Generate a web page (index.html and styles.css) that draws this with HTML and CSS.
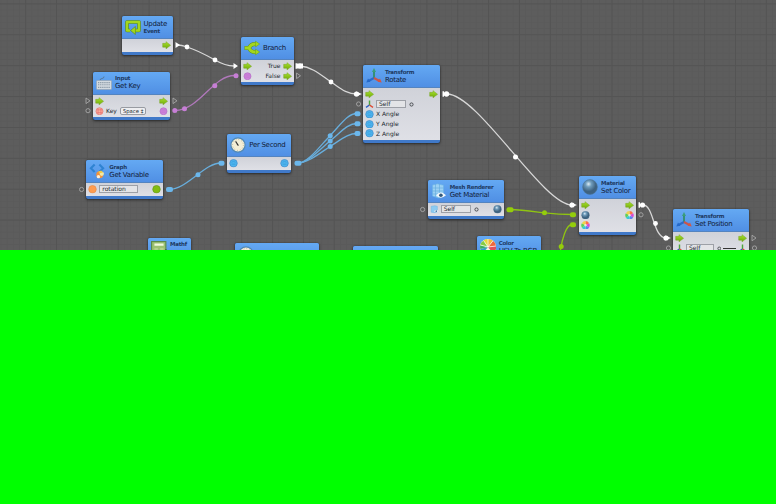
FILE: index.html
```
<!DOCTYPE html>
<html lang="en">
<head>
<meta charset="utf-8">
<title>Flow graph</title>
<link rel="stylesheet" href="styles.css">
</head>
<body>
<svg class="defs" width="0" height="0">
  <defs>
    <linearGradient id="gArrow" x2="0" y2="1"><stop stop-color="#a9e32c"/><stop offset="1" stop-color="#6fa90a"/></linearGradient>
    <radialGradient id="gBall" cx=".4" cy=".3"><stop stop-color="#dcecf5"/><stop offset=".4" stop-color="#6f9cbc"/><stop offset="1" stop-color="#3f627f"/></radialGradient>
    <symbol id="arrow" viewBox="0 0 9 8"><path d="M.7 2.1H4V.4L8.6 4 4 7.6V5.900H.7z" fill="url(#gArrow)" stroke="#78a52a" stroke-width=".5"/></symbol>
    <symbol id="num" viewBox="0 0 9 9"><circle cx="4.5" cy="4.5" r="4" fill="#4eb4ee" stroke="#3c88ca" stroke-width=".7"/><path d="M2.3 3.5q2.2-2 4.4 0M2.5 5.5h4" stroke="#3295d6" fill="none" stroke-width=".6"/></symbol>
    <symbol id="pink" viewBox="0 0 9 9"><circle cx="4.5" cy="4.5" r="3.7" fill="#cf82dc" stroke="#b26ac4" stroke-width=".7"/><path d="M2 3.2h5M2 5.4h5" stroke="#b568c6" stroke-width=".5"/></symbol>
    <symbol id="red" viewBox="0 0 9 9"><circle cx="4.5" cy="4.5" r="3.7" fill="#f8b09b" stroke="#e77272" stroke-width=".8"/><path d="M2 3h5M2 6h5M3 2v5M6 2v5" stroke="#e8616a" stroke-width=".6"/></symbol>
    <symbol id="orange" viewBox="0 0 9 9"><circle cx="4.5" cy="4.5" r="4" fill="#ff9c50" stroke="#e88b48" stroke-width=".7"/></symbol>
    <symbol id="green" viewBox="0 0 9 9"><circle cx="4.5" cy="4.5" r="4" fill="#82bd12" stroke="#649a18" stroke-width=".7"/></symbol>
    <symbol id="ball" viewBox="0 0 16 16"><circle cx="8" cy="8" r="7.4" fill="url(#gBall)" stroke="#4d7697" stroke-width=".6"/></symbol>
    <symbol id="axes" viewBox="0 0 16 16"><g fill="none" stroke-width="2"><path d="M8 10V3" stroke="#358f78"/><path d="M8 10 2.500 13" stroke="#2a6cc8"/><path d="M8 10l5.500 3" stroke="#c9564a"/></g><path d="M8 0l2 4H6z" fill="#3a9d7a"/><path d="M.3 14.500l1.700-4 2.400 3.200z" fill="#2468c8"/><path d="M15.700 14.500l-1.700-4-2.400 3.200z" fill="#d8553e"/></symbol>
    <symbol id="axesSmall" viewBox="0 0 9 9"><g fill="none" stroke-width="1.500"><path d="M4.500 5.300V.6" stroke="#4ba53c"/><path d="M4.500 5.300.8 7.800" stroke="#2c62c4"/><path d="M4.500 5.300l3.700 2.500" stroke="#dd4c34"/></g></symbol>
    <symbol id="wheel" viewBox="0 0 16 16"><path d="M8 8 8 0A8 8 0 0 1 14.9 4z" fill="#ff7048"/><path d="M8 8 14.9 4A8 8 0 0 1 14.9 12z" fill="#d94cd4"/><path d="M8 8 14.9 12A8 8 0 0 1 8 16z" fill="#5a83f0"/><path d="M8 8V16A8 8 0 0 1 1.1 12z" fill="#36cbd3"/><path d="M8 8 1.1 12A8 8 0 0 1 1.1 4z" fill="#62cf56"/><path d="M8 8 1.1 4A8 8 0 0 1 8 0z" fill="#f2d34a"/><circle cx="8" cy="8" r="2.2" fill="#fff" opacity=".7"/></symbol>
    <symbol id="fan" viewBox="0 0 16 16"><circle cx="8" cy="8" r="8" fill="#f5f2dc"/><path d="M8 8 3.500 1.400A8 8 0 0 1 8 0z" fill="#e6d83c"/><path d="M8 8V0A8 8 0 0 1 13 1.700z" fill="#f6b53a"/><path d="M8 8 13 1.700A8 8 0 0 1 16 7z" fill="#f1683c"/><path d="M8 8 16 7A8 8 0 0 1 13 14.200z" fill="#e0505c"/><path d="M8 8 .3 10A8 8 0 0 1 .3 6z" fill="#3fae62"/><path d="M8 8 .3 6A8 8 0 0 1 3.500 1.400z" fill="#86cb42"/><path d="M8 8 3 14.200A8 8 0 0 1 .3 10z" fill="#38a0c4"/><path d="M8 8 3.500 1.400M8 8V0M8 8l5-6.300M8 8l8-1M8 8 .3 6" stroke="#fff" stroke-width=".7"/></symbol>
    <symbol id="clock" viewBox="0 0 16 16"><circle cx="8" cy="8" r="7.100" fill="#f3eed6" stroke="#5289b5" stroke-width="1.200"/><circle cx="8" cy="8" r="5.4" fill="none" stroke="#a79f80" stroke-width=".8" stroke-dasharray=".8 2"/><path d="M8.4 8.6 5.6 4.4M8.4 8.6 7 7" stroke="#333" stroke-width="1.1"/></symbol>
    <symbol id="loop" viewBox="0 0 16 16"><g fill="none" stroke-linejoin="round"><path d="M5 11.5H2V3H14V11.5H9" stroke="#52851f" stroke-width="3.6"/><path d="M5 11.5H2V3H14V11.5H9" stroke="#a4d71c" stroke-width="2.5"/></g><path d="M5.500 11.5l4.900-4v8z" fill="#a4d71c" stroke="#52851f" stroke-width=".6"/></symbol>
    <symbol id="branch" viewBox="0 0 16 14"><g fill="none"><path d="M.5 7h4.500Q7 2.5 12 3M5 7q2 4.5 7 4" stroke="#5c8f24" stroke-width="3.900"/><path d="M.8 7h4.200Q7 2.5 12 3M5 7q2 4.5 7 4" stroke="#a4d71c" stroke-width="3"/></g><path d="M11.5.1 15.7 3l-4.2 3zM11.5 8l4.2 3-4.2 2.900z" fill="#a4d71c" stroke="#5c8f24" stroke-width=".4"/></symbol>
    <symbol id="keys" viewBox="0 0 16 14"><path d="M4 4.5Q4 2.5 6 2.5T8 .5" fill="none" stroke="#53718c" stroke-width=".8"/><rect x=".5" y="4.5" width="15" height="9" rx=".7" fill="#d3dae0" stroke="#95a5b5" stroke-width=".7"/><path d="M2 6.6h12M2 8.8h12M2 11.4h12" stroke="#8a99a6" stroke-width="1.1" stroke-dasharray="1.3 .8"/></symbol>
    <symbol id="graph" viewBox="0 0 17 16"><g fill="none" stroke="#2e83d2" stroke-width="2.2"><path d="M6 1 2 5l4 4"/><path d="M11 1l4 4-4 4"/></g><circle cx="11.4" cy="12" r="3.7" fill="#f4923c"/><circle cx="13.6" cy="11" r="2.3" fill="#efe9a8"/><circle cx="10" cy="14" r="1.8" fill="#fff0d7"/><path d="M10 8.5l3-1 2 2-4 1z" fill="#f0cb48"/></symbol>
    <symbol id="mesh" viewBox="0 0 15 16"><path d="M1 2 6 .8l6 1.4v11L7 15l-6-2z" fill="#9bd0f3" stroke="#6cb3e8" stroke-width=".7"/><path d="M1 5h11M1 8h11M1 11h11M4 1v13M8 1v13" stroke="#62a9dd" stroke-width=".6"/><path d="M4.5 12.3q4.7-5.6 10 0-5.3 4.8-10 0" fill="#f3f8fc"/><circle cx="9.4" cy="12.2" r="1.8" fill="#335a7d"/></symbol>
    <symbol id="meshSmall" viewBox="0 0 9 9"><path d="M1 1.300 5 .8l2.500.6v6L5 8.200 1 7.600z" fill="#8ccbf2" stroke="#69b1e2" stroke-width=".5"/><path d="M4 6.500q2.300-2.500 4.800 0-2.500 2.300-4.800 0" fill="#f3f8fc"/><circle cx="6.400" cy="6.500" r=".9" fill="#4a7ba5"/></symbol>
    <symbol id="calc" viewBox="0 0 14 14"><rect x=".5" y=".5" width="12.5" height="14" fill="#9cc272" stroke="#5b8a4b"/><path d="M3 3.2h8" stroke="#f2f9dc" stroke-width="2"/><path d="M3 7h3M3 9.5h3M8 7h3M8 9.5h2" stroke="#cce0a8"/><path d="M13.5 7.5 10 11" stroke="#344c38" stroke-width="1.2"/></symbol>
    <symbol id="target" viewBox="0 0 5 5"><circle cx="2.5" cy="2.5" r="1.6" fill="none" stroke="#3f4347" stroke-width=".9"/></symbol>
  </defs>
</svg>
<main class="canvas">
  <section class="board">
    <svg class="wires" width="776" height="250" viewBox="0 0 776 250">
      <g class="wire white">
        <path d="M178 45C181 45 184 46 187 47C197 50 206 55 215 60C221 63.500 226 66 234 66"/><path d="M300 66C313 67 322 76 331 82C340 88 346 94 357 94"/><path d="M447 94C478 94 543 205 572 205"/><path d="M643 205C654 205 653 238 666 238"/>
      </g>
      <g class="wire pink"><path d="M175 110.500C200 110 213 75 235 75.500"/></g>
      <g class="wire blue"><path d="M169 189.500C187 189.500 204 163 221 163"/><path d="M298 163C308 163 320 146 330 135.700C342 123 348 113.500 357 113.500"/><path d="M298 163C308 163 320 149 330 141C342 131 348 123.500 357 123.500"/><path d="M298 163C308 163 320 153 330 146.500C342 139 348 133.500 357 133.500"/></g>
      <g class="wire lime"><path d="M510 209.500C522 210 533 211.500 544.500 212.800S560 214.500 572 214.500"/><path d="M560.500 250C562 240 566 224.500 572 224.500"/></g>
      <g fill="#fff"><path d="M175.500 42l4.500 3-4.500 3zM233.500 63l4.500 3-4.500 3zM295.500 63.200h1.500v5.600h-1.500zM297 63.500l6 0v5h-6zM356 91.500l6 2.500-6 2.500zM442.500 91.200h1.500v5.600h-1.500zM571 202.500l6 2.500-6 2.500zM638.500 202.200h1.500v5.600h-1.500zM665 235.500l6 2.500-6 2.500z"/><circle cx="187" cy="47" r="2.400"/><circle cx="215" cy="60" r="2.400"/><circle cx="300" cy="66" r="2.500"/><circle cx="331" cy="82" r="2.400"/><circle cx="356.500" cy="94" r="2.600"/><circle cx="446.500" cy="94" r="2.700"/><circle cx="515.500" cy="157" r="2.500"/><circle cx="572" cy="205" r="2.600"/><circle cx="642.500" cy="205" r="2.600"/><circle cx="655.500" cy="223.500" r="2.400"/><circle cx="666" cy="238" r="2.600"/></g>
      <g fill="#c77fd6"><circle cx="174.800" cy="110.500" r="2.500"/><circle cx="184.500" cy="108.700" r="2.500"/><circle cx="214.800" cy="85.700" r="2.500"/><circle cx="236" cy="75.800" r="2.500"/></g>
      <g fill="#6bb7ec"><rect x="166" y="187" width="7" height="5" rx="2"/><circle cx="198" cy="174.700" r="2.500"/><rect x="218.500" y="160.800" width="6" height="5" rx="2"/><rect x="294.500" y="160.800" width="7" height="5" rx="2"/><circle cx="330.200" cy="135.700" r="2.500"/><circle cx="330.200" cy="141" r="2.500"/><circle cx="330.200" cy="146.500" r="2.500"/><rect x="354.500" y="111.200" width="6" height="5" rx="2"/><rect x="354.500" y="121.200" width="6" height="5" rx="2"/><rect x="354.500" y="130.900" width="6" height="5" rx="2"/></g>
      <g fill="#94cd0b"><rect x="506.500" y="207.200" width="7" height="5" rx="2"/><circle cx="544.500" cy="212.800" r="2.500"/><rect x="570" y="212.200" width="6" height="5" rx="2"/><rect x="570" y="222.200" width="6" height="5" rx="2"/><circle cx="561.200" cy="246.500" r="2.500"/></g>
      <g fill="none" stroke="#a6a6a6" stroke-width=".9"><circle cx="88" cy="110.700" r="2.100"/><circle cx="81.600" cy="189.500" r="2.100"/><circle cx="358.600" cy="104" r="2.100"/><circle cx="422.600" cy="209.500" r="2.100"/><circle cx="641" cy="214.800" r="2.100"/><circle cx="668.500" cy="248" r="2.100"/><circle cx="754.500" cy="248" r="2.100"/><path d="M86 98l4 2.800-4 2.800zM173 98l4 2.800-4 2.800zM296.500 73l4 2.800-4 2.800zM752 235.200l4 2.800-4 2.800z"/></g>
    </svg>

    <article class="node update"><header><svg class="icon"><use href="#loop"/></svg><div class="titles"><b>Update</b><i>Event</i></div></header>
      <div class="body"><div class="row end"><svg class="port"><use href="#arrow"/></svg></div></div></article>

    <article class="node getkey"><header><svg class="icon"><use href="#keys"/></svg><div class="titles"><i>Input</i><b>Get Key</b></div></header>
      <div class="body"><div class="row"><svg class="port"><use href="#arrow"/></svg><svg class="port last"><use href="#arrow"/></svg></div><div class="row"><svg class="port"><use href="#red"/></svg><span>Key</span><span class="select">Space ‡</span><svg class="port last"><use href="#pink"/></svg></div></div></article>

    <article class="node branch"><header><svg class="icon"><use href="#branch"/></svg><div class="titles"><b>Branch</b></div></header>
      <div class="body"><div class="row"><svg class="port"><use href="#arrow"/></svg><span class="last">True</span><svg class="port"><use href="#arrow"/></svg></div><div class="row"><svg class="port"><use href="#pink"/></svg><span class="last">False</span><svg class="port"><use href="#arrow"/></svg></div></div></article>

    <article class="node rotate"><header><svg class="icon"><use href="#axes"/></svg><div class="titles"><i>Transform</i><b>Rotate</b></div></header>
      <div class="body"><div class="row"><svg class="port"><use href="#arrow"/></svg><svg class="port last"><use href="#arrow"/></svg></div><div class="row"><svg class="port"><use href="#axesSmall"/></svg><span class="field">Self</span><svg class="target"><use href="#target"/></svg></div><div class="row"><svg class="port"><use href="#num"/></svg><span>X Angle</span></div><div class="row"><svg class="port"><use href="#num"/></svg><span>Y Angle</span></div><div class="row"><svg class="port"><use href="#num"/></svg><span>Z Angle</span></div></div></article>

    <article class="node getvar"><header><svg class="icon"><use href="#graph"/></svg><div class="titles"><i>Graph</i><b>Get Variable</b></div></header>
      <div class="body"><div class="row"><svg class="port"><use href="#orange"/></svg><span class="field wide">rotation</span><svg class="port last"><use href="#green"/></svg></div></div></article>

    <article class="node persec"><header><svg class="icon"><use href="#clock"/></svg><div class="titles"><b>Per Second</b></div></header>
      <div class="body"><div class="row"><svg class="port"><use href="#num"/></svg><svg class="port last"><use href="#num"/></svg></div></div></article>

    <article class="node getmat"><header><svg class="icon"><use href="#mesh"/></svg><div class="titles"><i>Mesh Renderer</i><b>Get Material</b></div></header>
      <div class="body"><div class="row"><svg class="port"><use href="#meshSmall"/></svg><span class="field">Self</span><svg class="target"><use href="#target"/></svg><svg class="port last"><use href="#ball"/></svg></div></div></article>

    <article class="node setcolor"><header><svg class="icon"><use href="#ball"/></svg><div class="titles"><i>Material</i><b>Set Color</b></div></header>
      <div class="body"><div class="row"><svg class="port"><use href="#arrow"/></svg><svg class="port last"><use href="#arrow"/></svg></div><div class="row"><svg class="port"><use href="#ball"/></svg><svg class="port last"><use href="#wheel"/></svg></div><div class="row"><svg class="port"><use href="#wheel"/></svg></div></div></article>

    <article class="node setpos"><header><svg class="icon"><use href="#axes"/></svg><div class="titles"><i>Transform</i><b>Set Position</b></div></header>
      <div class="body"><div class="row"><svg class="port"><use href="#arrow"/></svg><svg class="port last"><use href="#arrow"/></svg></div><div class="row"><svg class="port"><use href="#axesSmall"/></svg><span class="field">Self</span><svg class="target"><use href="#target"/></svg><span class="dash last"></span><svg class="port"><use href="#axesSmall"/></svg></div></div></article>

    <article class="node hsv"><header><svg class="icon"><use href="#fan"/></svg><div class="titles"><i>Color</i><b>HSV To RGB</b></div></header></article>
    <article class="node mathf"><header><svg class="icon"><use href="#calc"/></svg><div class="titles"><i>Mathf</i></div></header></article>
    <article class="node timer"><header><svg class="icon"><use href="#clock"/></svg></header></article>
    <article class="node blank"><header></header></article>
  </section>
  <section class="fill"></section>
</main>
</body>
</html>
```
FILE: styles.css
```
* { box-sizing: border-box; }
body { margin: 0; background: #00ff00; font-family: "DejaVu Sans", sans-serif; color: #202830; }
.defs { display: block; position: absolute; }
.canvas { display: flex; flex-direction: column; width: 776px; height: 504px; overflow: hidden; }
.board {
  position: relative;
  flex: 0 0 250px;
  overflow: hidden;
  background-color: #5d5d5d;
  background-image:
    linear-gradient(90deg, #545454 1px, transparent 1px),
    linear-gradient(#545454 1px, transparent 1px),
    linear-gradient(90deg, #5a5a5a 1px, transparent 1px),
    linear-gradient(#5a5a5a 1px, transparent 1px);
  background-size: 30.87px 30.9px, 30.87px 30.9px, 6.174px 6.18px, 6.174px 6.18px;
  background-position: 25.2px 3.4px;
}
.fill { flex: 1; background: #00ff00; }
.wires { position: absolute; left: 0; top: 0; }
.wire { fill: none; stroke-width: 1.3; }
.white { stroke: #d8d8d8; }
.wire.pink { stroke: #b078bb; }
.blue { stroke: #68aedd; }
.lime { stroke: #8fc412; }

.node {
  position: absolute;
  display: flex;
  flex-direction: column;
  border-radius: 2px;
  overflow: hidden;
  background: #4079c9;
  padding-bottom: 3px;
  box-shadow: 0 1px 3px rgba(0,0,0,.55), 0 0 1px rgba(0,0,0,.6);
}
.node header {
  display: flex;
  align-items: center;
  gap: 3px;
  flex: 0 0 23px;
  padding-left: 3px;
  background: linear-gradient(#64a9f3, #508fe4);
  border-bottom: 1px solid #5484c0;
}
.icon { width: 16px; height: 16px; flex: none; }
.titles { display: flex; flex-direction: column; white-space: nowrap; }
.titles b { font-weight: 400; font-size: 7px; line-height: 8px; letter-spacing: -.3px; color: #122038; }
.titles i { font-style: normal; font-weight: 700; font-size: 5.500px; line-height: 7px; letter-spacing: -.25px; color: #1d3a63; }
.body { display: flex; flex-direction: column; flex: 1; justify-content: center; padding: 0 2px; background: linear-gradient(#d0d2d9, #dfe0e6); }
.row { display: flex; align-items: center; height: 9.8px; gap: 2px; font-size: 6px; line-height: 8px; white-space: nowrap; }
.end { justify-content: flex-end; }
.port { width: 9px; height: 8.500px; flex: none; }
.last { margin-left: auto; }
.field { width: 30px; height: 8px; padding-left: 2px; line-height: 6.500px; border: 1px solid #9da0a7; background: #e3e4e7; }
.wide { width: 39px; }
.select { height: 8px; padding: 0 2px; margin-left: 1px; font-size: 5.300px; line-height: 6.500px; border: 1px solid #989ba2; border-radius: 2px; background: #eeeef1; }
.target { width: 5px; height: 5px; margin-left: 1px; }
.dash { width: 14px; border-top: 1px solid #333; }

.update { left: 121.500px; top: 16px; width: 51px; height: 39px; }
.getkey { left: 93px; top: 71.700px; width: 77px; height: 48.500px; }
.branch { left: 241px; top: 37px; width: 52.500px; height: 48px; }
.rotate { left: 363px; top: 65px; width: 76.700px; height: 78px; }
.getvar { left: 86.300px; top: 160px; width: 77px; height: 39px; }
.getvar header { gap: 4px; }
.persec { left: 227.300px; top: 134px; width: 64px; height: 39px; }
.getmat { left: 427.700px; top: 180px; width: 76.300px; height: 39px; }
.setcolor { left: 579px; top: 176px; width: 57px; height: 58.500px; }
.setpos { left: 673px; top: 209px; width: 76px; height: 48.500px; }
.hsv { left: 476.700px; top: 236px; width: 64.300px; height: 58px; }
.mathf { left: 148px; top: 237.500px; width: 43px; height: 39px; }
.mathf .titles { padding-bottom: 8px; }
.timer { left: 235px; top: 243px; width: 84px; height: 39px; }
.blank { left: 353px; top: 246px; width: 84.500px; height: 39px; }
```
